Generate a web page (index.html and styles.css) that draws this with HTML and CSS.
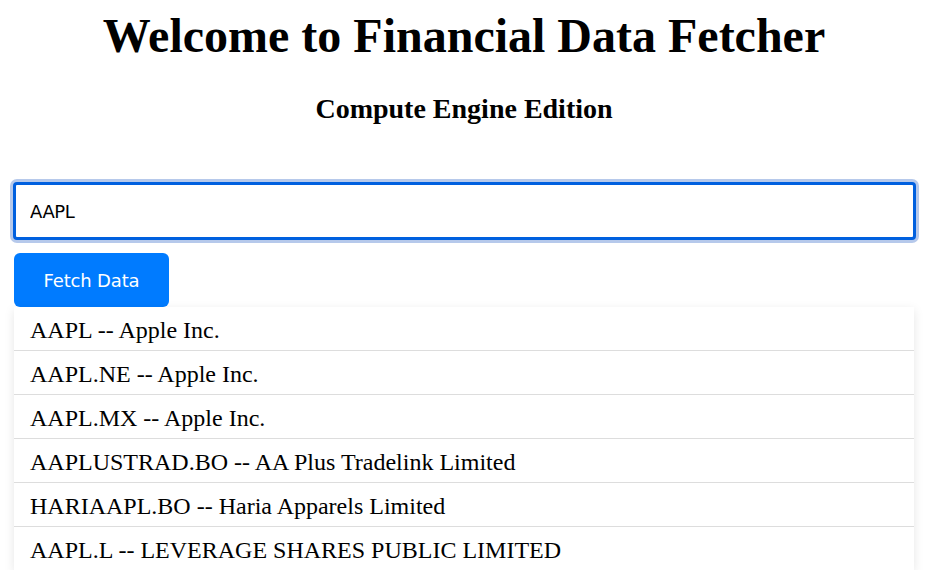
FILE: index.html
```html
<!DOCTYPE html>
<html>
<head>
<meta charset="utf-8">
<link rel="stylesheet" href="styles.css">
</head>
<body>
<h1 class="title">Welcome to Financial Data Fetcher</h1>
<h2 class="subtitle">Compute Engine Edition</h2>
<div class="search">
  <input class="ticker" type="text" value="AAPL">
  <button class="fetch">Fetch Data</button>
  <ul class="suggestions">
    <li class="item">AAPL -- Apple Inc.</li>
    <li class="item">AAPL.NE -- Apple Inc.</li>
    <li class="item">AAPL.MX -- Apple Inc.</li>
    <li class="item">AAPLUSTRAD.BO -- AA Plus Tradelink Limited</li>
    <li class="item">HARIAAPL.BO -- Haria Apparels Limited</li>
    <li class="item">AAPL.L -- LEVERAGE SHARES PUBLIC LIMITED</li>
  </ul>
</div>
</body>
</html>
```
FILE: styles.css
```css
html, body {
  margin: 0;
  padding: 0;
  background: #fff;
  font-family: "Liberation Serif", serif;
  color: #000;
}
.title {
  margin: 8px 7px 0 0;
  text-align: center;
  font-size: 48px;
  font-weight: bold;
  line-height: 55px;
}
.subtitle {
  margin: 30px 7px 0 0;
  text-align: center;
  font-size: 28px;
  font-weight: bold;
  line-height: 32px;
}
.search {
  margin: 57px 0 0 13px;
  width: 903px;
  display: flex;
  flex-direction: column;
  align-items: flex-start;
}
.ticker {
  box-sizing: border-box;
  width: 903px;
  height: 58px;
  margin: 0;
  padding: 0 14px;
  border: 3px solid #0060df;
  border-radius: 4px;
  box-shadow: 0 0 0 3px #b6c9eb;
  outline: none;
  font-family: "DejaVu Sans", Tahoma, sans-serif;
  font-size: 18px;
  letter-spacing: -0.4px;
  color: #000;
}
.fetch {
  margin: 13px 0 0 1px;
  width: 155px;
  height: 54px;
  background: #007bff;
  color: #fff;
  border: none;
  border-radius: 6px;
  font-family: "DejaVu Sans", Tahoma, sans-serif;
  font-size: 18px;
  letter-spacing: -0.15px;
}
.suggestions {
  list-style: none;
  margin: 0 0 0 1px;
  padding: 0;
  width: 900px;
  background: #fff;
  box-shadow: 0 3px 10px rgba(0,0,0,0.1);
}
.item {
  padding: 10px 16px 6px;
  font-size: 24px;
  line-height: 27px;
  border-bottom: 1px solid #ddd;
}
.item:last-child {
  border-bottom: none;
}
```
